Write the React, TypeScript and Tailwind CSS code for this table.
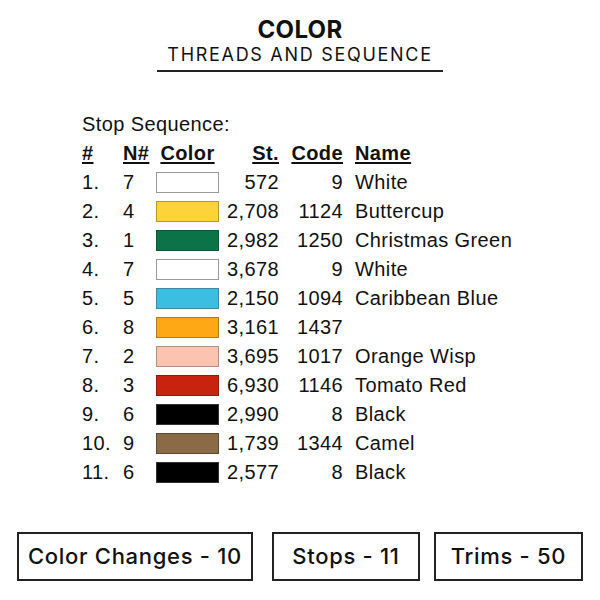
import React from 'react';

interface Stop {
  n: number;
  fill: string;
  edge: string;
  st: string;
  code: string;
  name: string;
}

const stops: Stop[] = [
  { n: 7, fill: '#ffffff', edge: '#9a9a9a', st: '572', code: '9', name: 'White' },
  { n: 4, fill: '#fdd33a', edge: '#b9962e', st: '2,708', code: '1124', name: 'Buttercup' },
  { n: 1, fill: '#0b7347', edge: '#0a5a38', st: '2,982', code: '1250', name: 'Christmas Green' },
  { n: 7, fill: '#ffffff', edge: '#9a9a9a', st: '3,678', code: '9', name: 'White' },
  { n: 5, fill: '#3bbfe0', edge: '#3a8aa3', st: '2,150', code: '1094', name: 'Caribbean Blue' },
  { n: 8, fill: '#fda814', edge: '#b37a1e', st: '3,161', code: '1437', name: '' },
  { n: 2, fill: '#fcc4b0', edge: '#b58e80', st: '3,695', code: '1017', name: 'Orange Wisp' },
  { n: 3, fill: '#c8230f', edge: '#8e1c10', st: '6,930', code: '1146', name: 'Tomato Red' },
  { n: 6, fill: '#000000', edge: '#333333', st: '2,990', code: '8', name: 'Black' },
  { n: 9, fill: '#8b6b46', edge: '#5e4a32', st: '1,739', code: '1344', name: 'Camel' },
  { n: 6, fill: '#000000', edge: '#333333', st: '2,577', code: '8', name: 'Black' },
];

const rowCls = 'grid grid-cols-[41px_33px_63px_60px_64px_auto] h-[29px] items-center leading-[29px]';
const headCls = 'underline decoration-2 underline-offset-[2px]';

export default function App() {
  return (
    <div className="w-[600px] h-[600px] bg-white text-[#111] flex flex-col">
      {/* Title */}
      <div className="pt-4 flex flex-col items-center font-['Inter',sans-serif]">
        <div className="text-[24px] leading-[28px] font-bold tracking-[0.3px]">COLOR</div>
        <div className="text-[18px] leading-[22px] tracking-[1.7px]">THREADS AND SEQUENCE</div>
        <div className="mt-1 w-[286px] h-[2px] bg-[#222]"></div>
      </div>

      {/* Sequence table */}
      <div className="mt-[38px] pl-[82px] font-['Liberation_Sans',Arial,sans-serif] text-[20px] tracking-[0.4px]">
        <div className="h-[29px] leading-[29px]">Stop Sequence:</div>
        <div className={`${rowCls} font-bold`}>
          <span><span className={headCls}>#</span></span>
          <span><span className={headCls}>N#</span></span>
          <span className="text-center"><span className={headCls}>Color</span></span>
          <span className="text-right"><span className={headCls}>St.</span></span>
          <span className="text-right"><span className={headCls}>Code</span></span>
          <span className="pl-3"><span className={headCls}>Name</span></span>
        </div>
        {stops.map((s, i) => (
          <div key={i} className={rowCls}>
            <span>{i + 1}.</span>
            <span>{s.n}</span>
            <span
              className="h-[21px] w-[63px] border"
              style={{ backgroundColor: s.fill, borderColor: s.edge }}
            ></span>
            <span className="text-right">{s.st}</span>
            <span className="text-right">{s.code}</span>
            <span className="pl-3 whitespace-nowrap">{s.name}</span>
          </div>
        ))}
      </div>

      {/* Totals */}
      <div className="mt-[45px] flex font-['Inter',sans-serif] text-[22px] font-medium tracking-[0.7px]">
        <div className="ml-[17px] w-[236px] h-[49px] border-2 border-[#222] flex items-center justify-center">
          Color Changes - 10
        </div>
        <div className="ml-[19px] w-[148px] h-[49px] border-2 border-[#222] flex items-center justify-center">
          Stops - 11
        </div>
        <div className="ml-[14px] w-[149px] h-[49px] border-2 border-[#222] flex items-center justify-center">
          Trims - 50
        </div>
      </div>
    </div>
  );
}
